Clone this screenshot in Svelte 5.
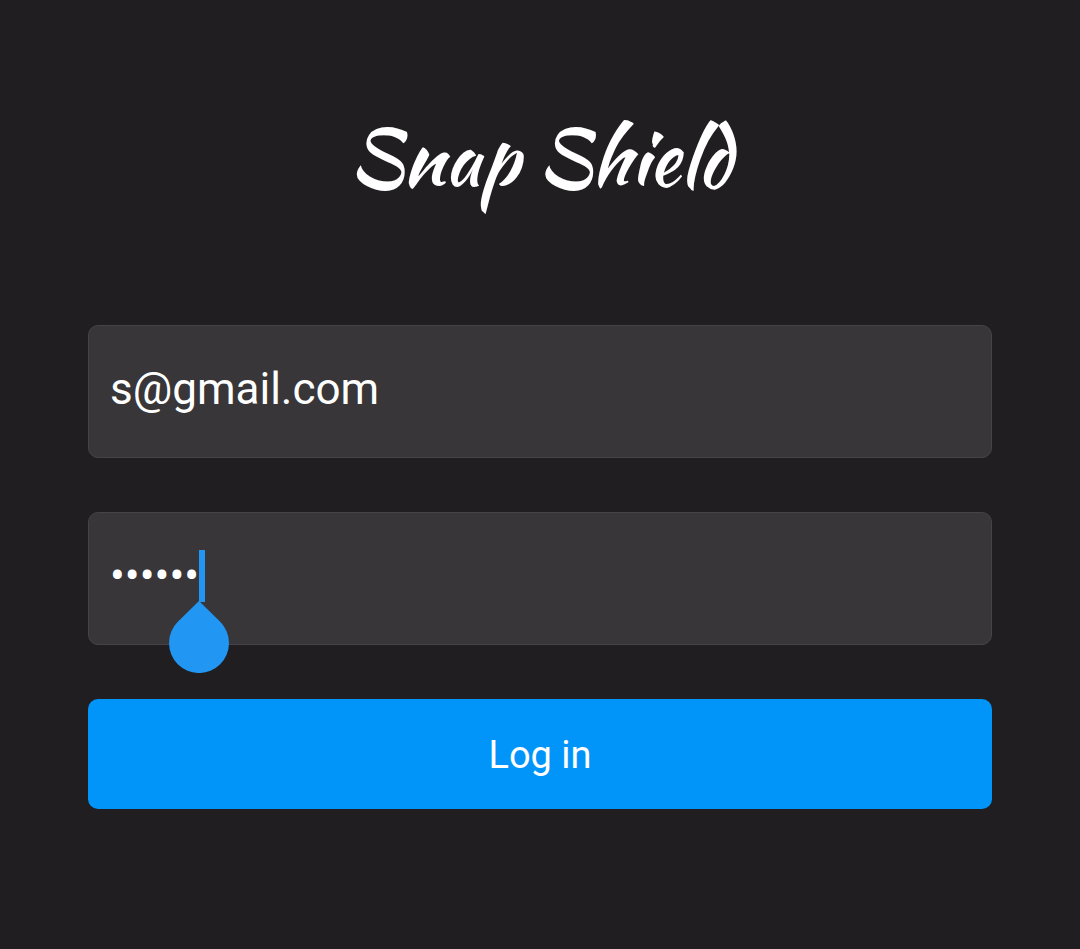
<script>
  let email = $state('s@gmail.com');
  let password = $state('secret');

  function submit(event) {
    event.preventDefault();
  }
</script>

<main>
  <h1>Snap Shield</h1>
  <form onsubmit={submit}>
    <div class="field">
      <input type="email" aria-label="Email" bind:value={email} />
    </div>
    <div class="field">
      <input type="password" aria-label="Password" bind:value={password} />
      <span class="caret" aria-hidden="true"></span>
      <svg class="handle" viewBox="0 0 60 72" aria-hidden="true">
        <path d="M30 0 L51.2 20.8 A30 30 0 1 1 8.8 20.8 Z" fill="#2196f3" />
      </svg>
    </div>
    <button type="submit">Log in</button>
  </form>
</main>

<style>
  :global(body) {
    margin: 0;
    background: #201e21;
  }

  main {
    box-sizing: border-box;
    min-height: 100vh;
    padding: 110px 88px;
    color: #fff;
    font-family: Roboto, sans-serif;
  }

  h1 {
    margin: 0 0 119px;
    font: 400 77px/96px 'Kaushan Script', cursive;
    text-align: center;
  }

  form {
    display: flex;
    flex-direction: column;
    gap: 54px;
  }

  .field {
    position: relative;
    display: flex;
  }

  input {
    box-sizing: border-box;
    width: 100%;
    height: 133px;
    padding: 37px 21px 42px;
    border: 1px solid #454347;
    border-radius: 10px;
    outline: none;
    background: #383638;
    color: #fff;
    font: 400 44px/52px Roboto, sans-serif;
  }

  .caret {
    position: absolute;
    top: 38px;
    left: 111px;
    width: 6px;
    height: 52px;
    background: #2196f3;
  }

  .handle {
    position: absolute;
    top: 89px;
    left: 81px;
    width: 60px;
    height: 72px;
  }

  button {
    padding: 32px 24px 30px;
    border: 0;
    border-radius: 10px;
    background: #0295f9;
    color: #fff;
    font: 400 38px/48px Roboto, sans-serif;
    cursor: pointer;
  }
</style>
